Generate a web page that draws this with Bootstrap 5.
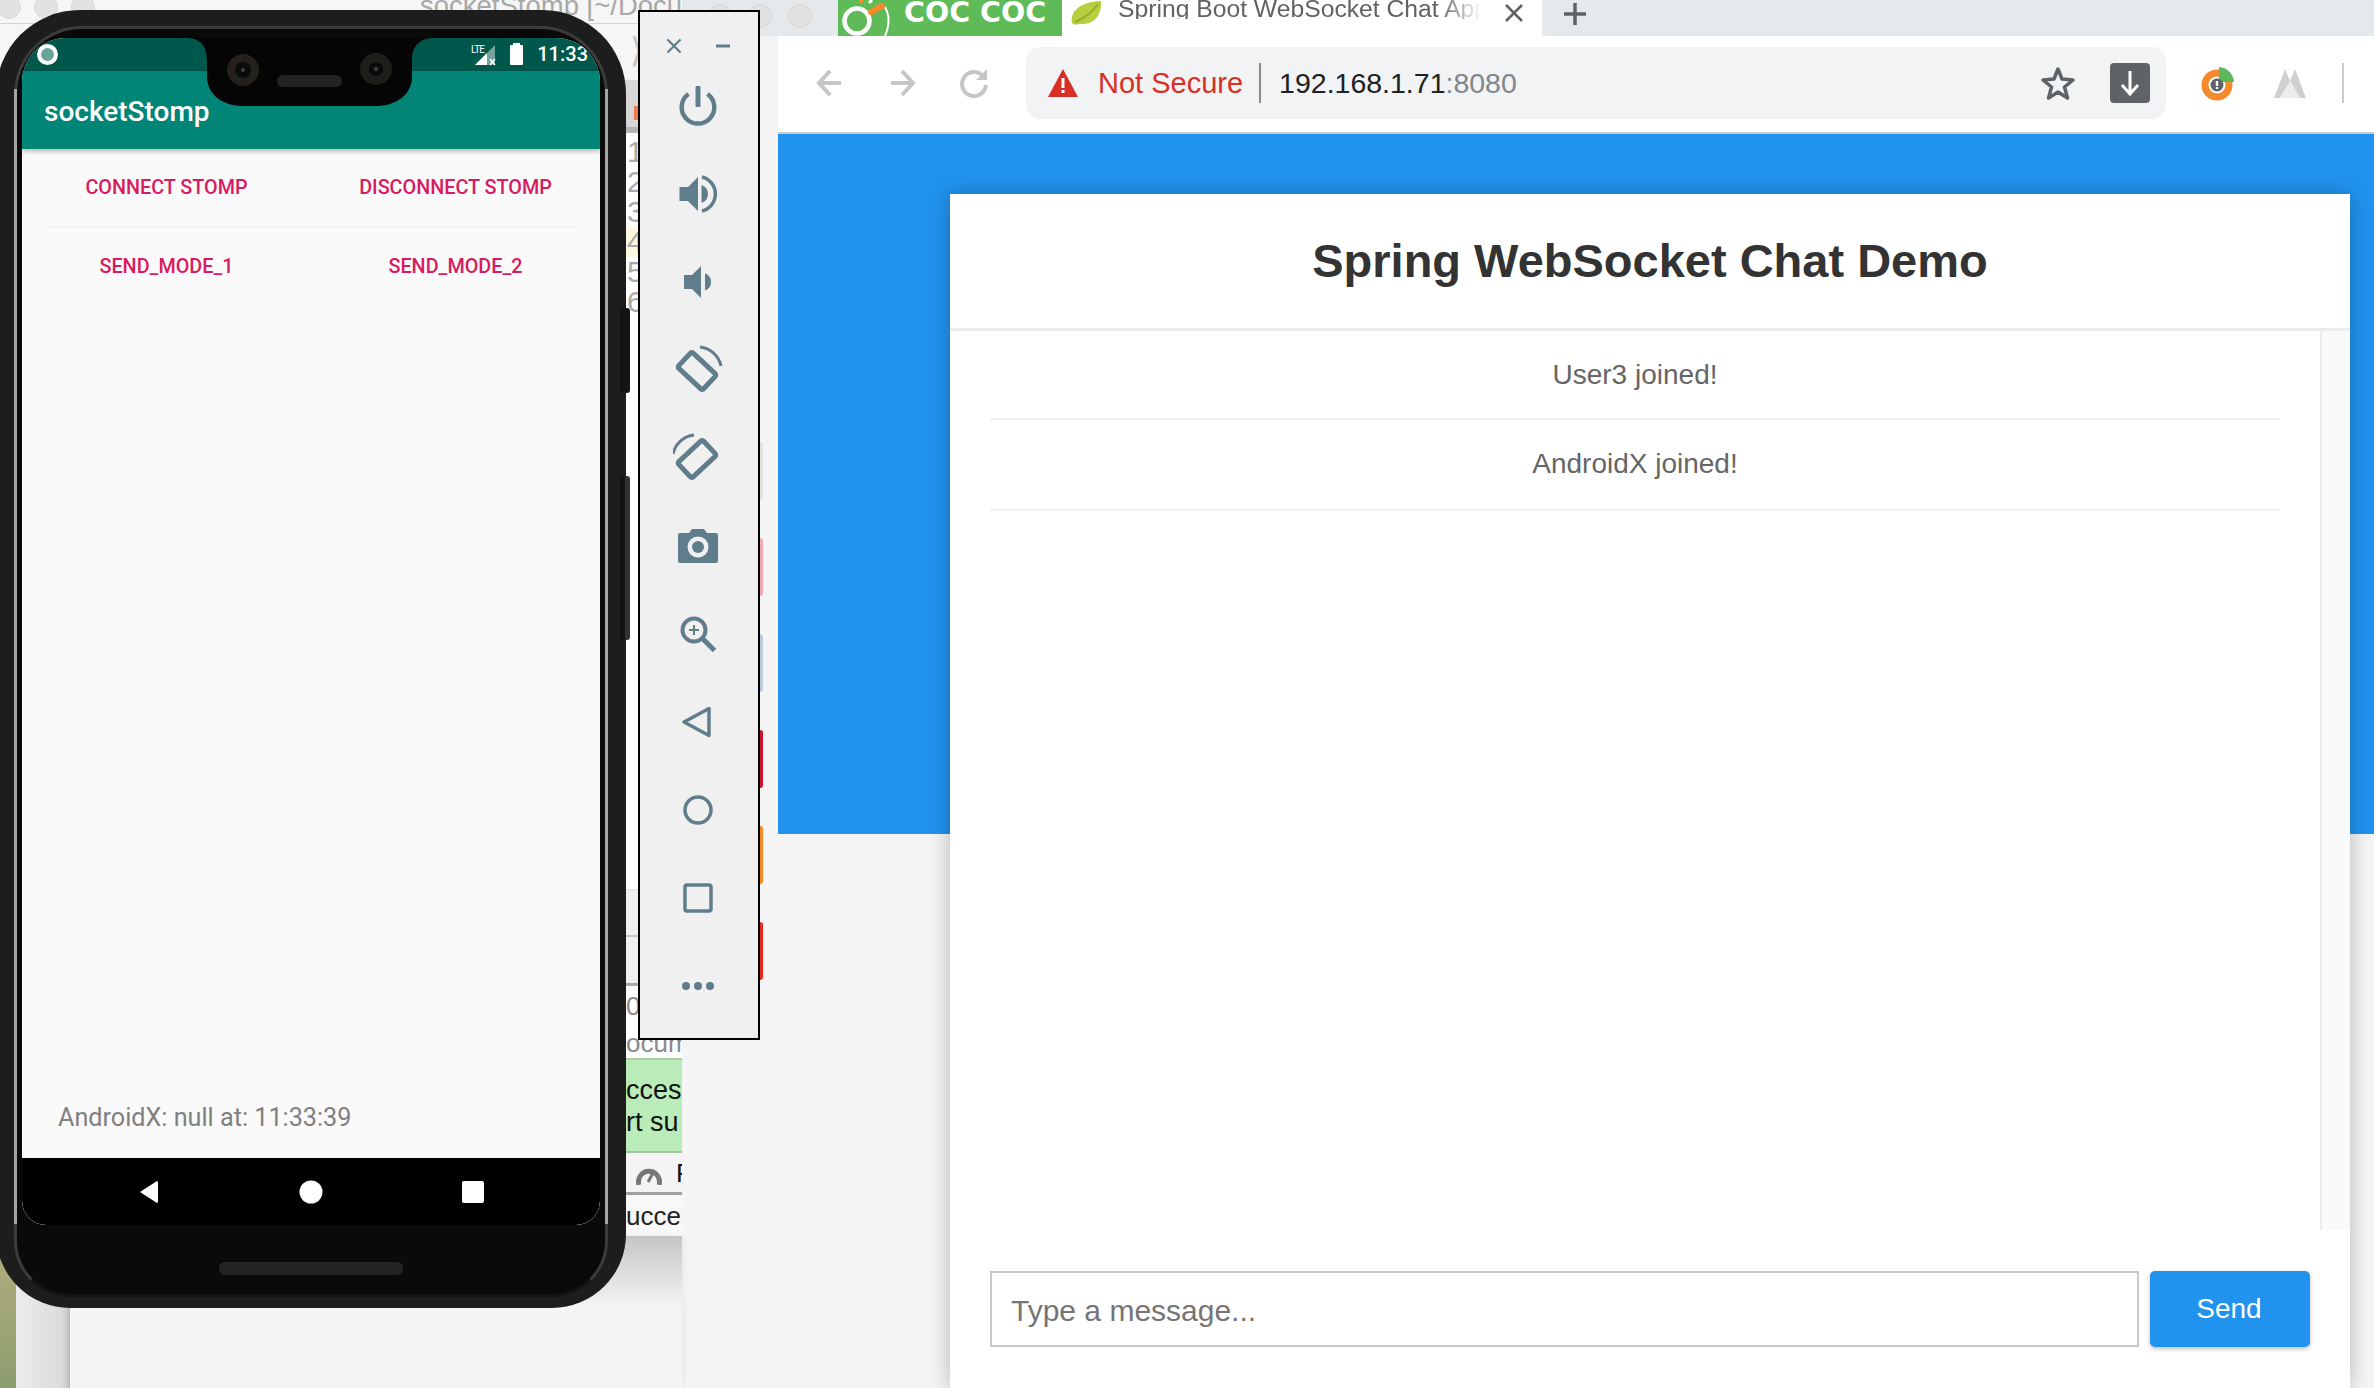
<!DOCTYPE html>
<html lang="en">
<head>
<meta charset="UTF-8">
<title>socketStomp and Spring WebSocket Chat</title>
<link href="https://cdn.jsdelivr.net/npm/bootstrap@5.3.0/dist/css/bootstrap.min.css" rel="stylesheet">
<style>
    html, body { margin: 0; height: 100%; }
    body { width: 2374px; height: 1388px; overflow: hidden; position: relative; background: #f5f5f5; font-family: "Liberation Sans", Arial, sans-serif; }

    /* IDE window behind everything */
    .ide { position: absolute; left: 0; top: 0; width: 682px; height: 1237px; overflow: hidden; background: #fff; }
    .ide-title { height: 24px; background: #f6f6f6; border-bottom: 1px solid #d4d4d4; overflow: hidden; }
    .light-dot { width: 24px; height: 24px; border-radius: 50%; background: #e2e2e2; border: 1px solid #d8d8d8; flex: none; margin-top: -5px; }
    .ide-title .light-dot { margin-right: 16px; margin-left: -3px; }
    .ide-name { position: absolute; left: 420px; top: -12px; font-size: 27.5px; line-height: 36px; color: #a8a8a8; white-space: nowrap; }
    .ide-tools { height: 56px; background: #f6f6f6; padding-left: 630px; color: #c4c4c4; font-size: 34px; line-height: 52px; }
    .ide-tabs { height: 53px; background: #d6d6d6; border-bottom: 6px solid #b4b4b4; padding: 26px 0 0 634px; }
    .ide-tab-mark { width: 6px; height: 14px; background: #ef7d4c; }
    .ide-edit { height: 756px; background: #fff; padding: 4px 0 0 627px; color: #aaa; font-size: 30px; line-height: 30px; }
    .ide-edit div { height: 30px; }
    .ide-edit .cur-line { background: #fdf8e0; margin-left: -1px; padding-left: 1px; }
    .ide-rule-a { height: 46px; background: #f0f0f0; border-top: 2px solid #e6e6e6; }
    .ide-rule-b { height: 48px; background: #f0f0f0; border-top: 2px solid #c8c8c8; }
    .ide-run { height: 75px; background: #fff; border-top: 3px solid #a8a8a8; padding: 2px 0 0 626px; font-size: 26px; line-height: 37px; color: #8a8a8a; white-space: nowrap; overflow: hidden; }
    .ide-ok { height: 95px; background: #b9ecb9; border-top: 2px solid #a6cfa6; border-bottom: 2px solid #a0c8a0; padding: 14px 0 0 626px; font-size: 27px; line-height: 32px; color: #111; white-space: nowrap; overflow: hidden; }
    .ide-perf { height: 42px; background: #f4f4f4; padding-left: 636px; color: #111; font-size: 26px; line-height: 40px; gap: 14px; overflow: hidden; border-bottom: 3px solid #a0a0a0; }
    .perf-gauge { margin-top: 12px; flex: none; }
    .ide-log { height: 42px; background: #f8f8f8; padding-left: 626px; color: #222; font-size: 26px; line-height: 42px; white-space: nowrap; overflow: hidden; border-bottom: 1px solid #c8c8c8; }
    .ide-below { position: absolute; left: 0; top: 1237px; width: 682px; height: 151px; }
    .wall { width: 16px; background: linear-gradient(#b4ae7e, #8c9e6e); }
    .pale-win { width: 54px; background: linear-gradient(90deg, #ececec, #dcdcdc 85%, #c4c4c4); border-right: 1px solid #b8b8b8; }
    .back-win { background: linear-gradient(#c6c6c6, #f4f4f4 70px); box-shadow: 2px 0 8px rgba(0,0,0,.06); }

    /* slivers of the dock */
    .dock { position: absolute; left: 760px; top: 442px; width: 3px; gap: 38px; }
    .dock-item { height: 58px; border-radius: 0 4px 4px 0; }
    .dock-a { background: #e2e2dc; }
    .dock-b { background: #f6a9ae; }
    .dock-c { background: #bccbe0; }
    .dock-d { background: #c8142c; }
    .dock-e { background: #f58a22; }
    .dock-f { background: #e8291f; }

    /* browser */
    .tabs-strip { position: absolute; left: 682px; top: 0; right: 0; height: 36px; background: #e6e9ec; overflow: hidden; }
    .tabs-lights { width: 156px; padding-left: 26px; gap: 16px; }
    .coc-tab { width: 224px; height: 36px; background: #5fbb57; overflow: hidden; color: #fff; font-family: "DejaVu Sans", sans-serif; font-weight: 700; font-size: 28.5px; line-height: 22px; white-space: nowrap; }
    .coc-tab svg { flex: none; margin-right: 14px; }
    .coc-tab span { margin-top: -10px; }
    .page-tab { width: 480px; height: 36px; background: #fff; padding-left: 8px; }
    .tab-label { width: 364px; margin-left: 16px; height: 20px; margin-bottom: 18px; line-height: 20px; font-size: 24.7px; color: #5f6368; white-space: nowrap; overflow: hidden; -webkit-mask-image: linear-gradient(90deg, #000 88%, transparent); mask-image: linear-gradient(90deg, #000 88%, transparent); }
    .tab-x { margin-left: 22px; margin-bottom: 10px; }
    .tab-add { margin-left: 20px; margin-bottom: 8px; }

    .browser { position: absolute; left: 778px; top: 36px; right: 0; bottom: 0; background: #f4f4f4; overflow: hidden; }
    .tool-row { height: 98px; background: #fff; border-bottom: 2px solid #c9cbcd; padding: 12px 0 14px 0; flex: none; }
    .nav-btn { width: 72px; }
    .nav-first { margin-left: 16px; }
    .omni { width: 1140px; height: 72px; margin-left: 16px; background: #f1f3f4; border-radius: 14px; padding: 0 16px 0 21px; }
    .not-secure { color: #d93025; font-size: 29px; margin-left: 19px; padding-right: 16px; border-right: 2px solid #8a8a8a; line-height: 40px; white-space: nowrap; }
    .omni-url { margin-left: 18px; font-size: 28.5px; color: #202124; white-space: nowrap; }
    .omni-url span { color: #80868b; }
    .dl-box { width: 40px; height: 40px; background: #5f6368; border-radius: 4px; margin-left: 35px; }
    .ext-a { margin-left: 35px; }
    .ext-b { margin-left: 38px; }
    .tool-sep { width: 2px; height: 40px; background: #ccc; margin-left: 35px; }

    .hero { position: absolute; left: 0; right: 0; top: 98px; height: 700px; background: #2192ee; }
    .chat-card { position: absolute; left: 172px; top: 158px; width: 1400px; height: 1194px; background: #fff; box-shadow: 0 1px 20px rgba(0,0,0,.25); }
    .chat-head { height: 137px; border-bottom: 3px solid #ececec; flex: none; }
    .chat-head h2 { font-size: 47px; font-weight: 700; color: #333; margin: 0; line-height: 1.2; }
    .chat-body { height: 899px; flex: none; }
    .chat-list { width: 1370px; padding: 0 40px; list-style: none; margin: 0; }
    .chat-list li { height: 91px; line-height: 60px; padding-top: 14px; text-align: center; font-size: 28px; color: #666; border-bottom: 2px solid #f2f2f2; }
    .chat-list li:first-child { height: 89px; }
    .chat-track { width: 30px; background: #fafafa; border-left: 2px solid #ececec; }
    .chat-form { padding: 41px 40px 0; gap: 11px; }
    .chat-form .form-control { height: 76px; border: 2px solid #c8c8c8; border-radius: 0; font-size: 30px; padding: 4px 19px 0; color: #333; font-family: inherit; box-shadow: none; }
    .chat-form .form-control::placeholder { color: #757575; opacity: 1; }
    .send-btn { width: 160px; height: 76px; background: #2192ee; border: 0; border-radius: 5px; color: #fff; font-size: 28px; box-shadow: 0 2px 4px rgba(0,0,0,.25); flex: none; padding-right: 14px; }

    /* emulator side panel */
    .emu-panel { position: absolute; left: 638px; top: 10px; width: 122px; height: 1030px; background: #f0f0f0; border: 2px solid #000; padding-top: 18px; }
    .emu-head { height: 32px; padding: 0 28px 0 26px; }
    .emu-btn { height: 88px; padding-right: 2px; }

    /* phone */
    .phone { position: absolute; left: -4px; top: 10px; width: 630px; height: 1298px; background: #1d1d1d; border-radius: 84px 84px 74px 74px; padding: 16px 18px 11px 18px; }
    .phone::before, .phone::after { content: ""; position: absolute; left: 624px; width: 10px; background: #141414; border-radius: 0 3px 3px 0; }
    .phone::before { top: 298px; height: 85px; }
    .phone::after { top: 466px; height: 164px; border-right: 5px solid #333; }
    .phone-rim { height: 100%; background: #0a0a0a; border: 3px solid #3c3c3c; border-bottom-color: #141414; border-radius: 68px 68px 56px 56px; padding: 9px 5px 0; position: relative; }
    .phone-rim::before, .phone-rim::after { content: ""; position: absolute; top: 60px; bottom: 70px; width: 3px; background: #a4a4a4; }
    .phone-rim::before { left: -3px; }
    .phone-rim::after { right: -3px; }
    .phone-screen { height: 1187px; border-radius: 44px 44px 24px 24px; overflow: hidden; background: #fafafa; }
    .status-row { height: 33px; background: #00574b; padding: 0 12px 0 15px; color: #fff; flex: none; }
    .status-dot { width: 21px; height: 21px; border-radius: 50%; background: #68a49b; border: 4px solid #fff; }
    .status-time { font-family: Roboto, sans-serif; font-weight: 500; font-size: 20px; margin-left: 14px; line-height: 33px; }
    .battery { width: 13px; height: 20px; background: #fff; border-radius: 1px; position: relative; margin-left: 13px; }
    .battery::before { content: ""; position: absolute; left: 3px; top: -2px; width: 7px; height: 2px; background: #fff; }
    .app-bar { height: 78px; background: #008577; box-shadow: 0 2px 5px rgba(0,0,0,.3); padding-left: 22px; padding-top: 22px; flex: none; position: relative; }
    .app-bar span { color: #fff; font-family: Roboto, sans-serif; font-weight: 500; font-size: 28px; line-height: 38px; }
    .app-content { flex: 1 1 auto; }
    .app-btn { height: 77px; line-height: 77px; text-align: center; color: #d81b60; font-family: Roboto, sans-serif; font-weight: 500; font-size: 19.8px; }
    .app-line { height: 2px; background: #f2f2f2; margin: 0 22px; }
    .app-log { margin-top: auto; padding: 0 0 21px 36px; font-family: Roboto, sans-serif; font-size: 25.2px; line-height: 38px; color: #808080; }
    .soft-nav { height: 67px; background: #000; border-radius: 0 0 24px 24px; flex: none; }
    .soft-key { width: 162px; }
    .notch { position: absolute; left: 168px; top: 9px; }
    .chin-slot { width: 184px; height: 13px; margin: 37px auto 0; background: #242424; border-radius: 6px; }
</style>
</head>
<body>

<!-- IDE window, mostly covered by the phone -->
<div class="ide d-flex flex-column">
    <div class="ide-title d-flex">
        <span class="light-dot"></span><span class="light-dot"></span><span class="light-dot"></span>
        <span class="ide-name">socketStomp [~/Docu</span>
    </div>
    <div class="ide-tools">&#x27E9;</div>
    <div class="ide-tabs"><div class="ide-tab-mark"></div></div>
    <div class="ide-edit">
        <div>1</div><div>2</div><div>3</div><div class="cur-line">4</div><div>5</div><div>6</div>
    </div>
    <div class="ide-rule-a"></div>
    <div class="ide-rule-b"></div>
    <div class="ide-run">0-<br>ocum</div>
    <div class="ide-ok">ccess<br>rt su</div>
    <div class="ide-perf d-flex">
        <svg class="perf-gauge" width="26" height="20" viewBox="0 0 26 20"><path d="M3 20 A10.500 10.500 0 1 1 23 20" fill="none" stroke="#777" stroke-width="5"/><path d="M12 17 L17 8" stroke="#777" stroke-width="3"/></svg>
        <span>P</span>
    </div>
    <div class="ide-log">ucces</div>
</div>
<div class="ide-below d-flex">
    <div class="wall"></div>
    <div class="pale-win"></div>
    <div class="back-win flex-grow-1"></div>
</div>

<div class="dock d-flex flex-column">
    <div class="dock-item dock-a"></div>
    <div class="dock-item dock-b"></div>
    <div class="dock-item dock-c"></div>
    <div class="dock-item dock-d"></div>
    <div class="dock-item dock-e"></div>
    <div class="dock-item dock-f"></div>
</div>

<!-- Browser tabs -->
<div class="tabs-strip d-flex align-items-center">
    <div class="tabs-lights d-flex">
        <span class="light-dot"></span><span class="light-dot"></span><span class="light-dot"></span>
    </div>
    <div class="coc-tab d-flex align-items-center">
        <svg width="52" height="36" viewBox="0 0 52 36">
            <circle cx="19" cy="21" r="12.500" fill="none" stroke="#fff" stroke-width="4.500"/>
            <path d="M47 7 Q54 20 47 36" fill="none" stroke="#fff" stroke-width="2"/>
            <path d="M33 12 L44 6" stroke="#f58a2c" stroke-width="6" stroke-linecap="round"/>
            <path d="M22 3 L24 -1" stroke="#f58a2c" stroke-width="4"/>
            <path d="M31 3 L34 0" stroke="#fff" stroke-width="3"/>
        </svg>
        <span>COC COC</span>
    </div>
    <div class="page-tab d-flex align-items-center">
        <svg width="32" height="26" viewBox="0 0 32 26" class="mb-2"><path d="M2 22 C0 10 10 1 31 0 C32 12 26 24 10 23 C7 23 4 25 2 22Z" fill="#b7cf3e"/><path d="M5 21 C12 18 22 12 28 3" fill="none" stroke="#8fa82c" stroke-width="1.500"/></svg>
        <span class="tab-label">Spring Boot WebSocket Chat App</span>
        <svg class="tab-x" width="20" height="20" viewBox="0 0 20 20"><path d="M2 2 L18 18 M18 2 L2 18" stroke="#5f6368" stroke-width="2.500"/></svg>
    </div>
    <svg class="tab-add" width="26" height="26" viewBox="0 0 26 26"><path d="M13 2 V24 M2 13 H24" stroke="#5f6368" stroke-width="3.500"/></svg>
</div>

<!-- Browser window -->
<div class="browser">
    <div class="tool-row d-flex align-items-center">
        <div class="nav-btn nav-first d-flex justify-content-center">
            <svg width="28" height="30" viewBox="0 0 28 30"><path d="M25 15 H4 M14 3 L3 15 L14 27" fill="none" stroke="#c4c6c8" stroke-width="4"/></svg>
        </div>
        <div class="nav-btn d-flex justify-content-center">
            <svg width="28" height="30" viewBox="0 0 28 30"><path d="M3 15 H24 M14 3 L25 15 L14 27" fill="none" stroke="#c4c6c8" stroke-width="4"/></svg>
        </div>
        <div class="nav-btn d-flex justify-content-center">
            <svg width="30" height="30" viewBox="0 0 30 30"><path d="M24 8 A12 12 0 1 0 27 17" fill="none" stroke="#c4c6c8" stroke-width="4"/><path d="M17 12 H28 V1Z" fill="#c4c6c8"/></svg>
        </div>
        <div class="omni d-flex align-items-center">
            <svg width="32" height="30" viewBox="0 0 32 30"><path d="M16 1 L31 29 H1Z" fill="#d93025"/><rect x="14.500" y="10" width="3" height="10" fill="#fff"/><rect x="14.500" y="22" width="3" height="3" fill="#fff"/></svg>
            <span class="not-secure">Not Secure</span>
            <span class="omni-url">192.168.1.71<span>:8080</span></span>
            <svg class="ms-auto" width="34" height="34" viewBox="0 0 34 34"><path d="M17 3 L21 13 L32 14 L23.500 21 L26.500 32 L17 26 L7.500 32 L10.500 21 L2 14 L13 13Z" fill="none" stroke="#5f6368" stroke-width="3.500" stroke-linejoin="round"/></svg>
            <div class="dl-box d-flex align-items-center justify-content-center">
                <svg width="22" height="28" viewBox="0 0 22 28"><path d="M11 2 V25 M3 16 L11 25 L19 16" fill="none" stroke="#fff" stroke-width="3"/></svg>
            </div>
        </div>
        <svg class="ext-a" width="34" height="36" viewBox="0 0 34 36">
            <circle cx="16" cy="20" r="12" fill="none" stroke="#f58a2c" stroke-width="7"/>
            <path d="M18 2 A16 16 0 0 1 33 17 H18Z" fill="#5cb85c"/>
            <circle cx="16" cy="20" r="6.500" fill="#5f6368"/>
            <rect x="14.800" y="16" width="2.400" height="5" fill="#fff"/><rect x="14.800" y="22" width="2.400" height="2" fill="#fff"/>
        </svg>
        <svg class="ext-b" width="34" height="32" viewBox="0 0 34 32"><path d="M1 31 L12 2 L17 14 L22 2 L33 31 H27 L17 14 L7 31Z" fill="#cfcfcf"/><path d="M7 31 L17 14 L27 31Z" fill="#ececec"/></svg>
        <div class="tool-sep"></div>
    </div>
    <div class="hero"></div>
    <div class="chat-card d-flex flex-column">
        <div class="chat-head d-flex align-items-center justify-content-center">
            <h2>Spring WebSocket Chat Demo</h2>
        </div>
        <div class="chat-body d-flex">
            <ul class="chat-list">
                <li>User3 joined!</li>
                <li>AndroidX joined!</li>
            </ul>
            <div class="chat-track flex-grow-1"></div>
        </div>
        <form class="chat-form d-flex">
            <input type="text" class="form-control" placeholder="Type a message...">
            <button type="button" class="btn send-btn">Send</button>
        </form>
    </div>
</div>

<!-- Emulator side panel -->
<div class="emu-panel d-flex flex-column">
    <div class="emu-head d-flex align-items-center justify-content-between">
        <svg width="16" height="16" viewBox="0 0 16 16"><path d="M1.500 1.500 L14.500 14.500 M14.500 1.500 L1.500 14.500" stroke="#607d8b" stroke-width="2.200"/></svg>
        <svg width="14" height="4" viewBox="0 0 14 4"><rect width="14" height="3" y="0.500" fill="#607d8b"/></svg>
    </div>
    <div class="emu-btn d-flex align-items-center justify-content-center">
        <svg width="44" height="44" viewBox="0 0 44 44"><path d="M12.500 10 A16.300 16.300 0 1 0 31.500 10" fill="none" stroke="#607d8b" stroke-width="4.500"/><rect x="19.500" y="2" width="5" height="21" rx="1" fill="#607d8b"/></svg>
    </div>
    <div class="emu-btn d-flex align-items-center justify-content-center">
        <svg width="44" height="44" viewBox="0 0 44 44"><path d="M3.500 15 H12 L22 5 V39 L12 29 H3.500Z" fill="#607d8b"/><path d="M25.500 13 A9.500 9.500 0 0 1 25.500 31Z" fill="#607d8b"/><path d="M26 5 A17.500 17.500 0 0 1 26 39" fill="none" stroke="#607d8b" stroke-width="3.500"/></svg>
    </div>
    <div class="emu-btn d-flex align-items-center justify-content-center">
        <svg width="44" height="44" viewBox="0 0 44 44"><path d="M8 15 H16 L25 6 V38 L16 29 H8Z" fill="#607d8b"/><path d="M29 13.500 A9 9 0 0 1 29 30.500Z" fill="#607d8b"/></svg>
    </div>
    <div class="emu-btn d-flex align-items-center justify-content-center">
        <svg width="50" height="50" viewBox="0 0 50 50"><rect x="7" y="15.500" width="34" height="21" rx="2" transform="rotate(43 24 26)" fill="none" stroke="#607d8b" stroke-width="5"/><path d="M27 2 A24 24 0 0 1 48 21" fill="none" stroke="#607d8b" stroke-width="3"/></svg>
    </div>
    <div class="emu-btn d-flex align-items-center justify-content-center">
        <svg width="50" height="50" viewBox="0 0 50 50"><g transform="matrix(-1 0 0 1 48 0)"><rect x="7" y="15.500" width="34" height="21" rx="2" transform="rotate(43 24 26)" fill="none" stroke="#607d8b" stroke-width="5"/><path d="M27 2 A24 24 0 0 1 48 21" fill="none" stroke="#607d8b" stroke-width="3"/></g></svg>
    </div>
    <div class="emu-btn d-flex align-items-center justify-content-center">
        <svg width="44" height="44" viewBox="0 0 44 44"><path d="M4 9 H13 L16 5 H28 L31 9 H40 A2 2 0 0 1 42 11 V37 A2 2 0 0 1 40 39 H4 A2 2 0 0 1 2 37 V11 A2 2 0 0 1 4 9Z" fill="#607d8b"/><circle cx="22" cy="23" r="10.500" fill="#f0f0f0"/><circle cx="22" cy="23" r="6" fill="#607d8b"/></svg>
    </div>
    <div class="emu-btn d-flex align-items-center justify-content-center">
        <svg width="44" height="44" viewBox="0 0 44 44"><circle cx="18" cy="18" r="11.500" fill="none" stroke="#607d8b" stroke-width="4"/><path d="M13 18 H23 M18 13 V23" stroke="#607d8b" stroke-width="2"/><path d="M26.500 26.500 L38.500 38.500" stroke="#607d8b" stroke-width="5"/></svg>
    </div>
    <div class="emu-btn d-flex align-items-center justify-content-center">
        <svg width="44" height="44" viewBox="0 0 44 44"><path d="M8 22 L33 8.500 V35.500Z" fill="none" stroke="#607d8b" stroke-width="3.500" stroke-linejoin="round"/></svg>
    </div>
    <div class="emu-btn d-flex align-items-center justify-content-center">
        <svg width="44" height="44" viewBox="0 0 44 44"><circle cx="22" cy="22" r="13" fill="none" stroke="#607d8b" stroke-width="3.500"/></svg>
    </div>
    <div class="emu-btn d-flex align-items-center justify-content-center">
        <svg width="44" height="44" viewBox="0 0 44 44"><rect x="9" y="9" width="26" height="26" rx="2" fill="none" stroke="#607d8b" stroke-width="3.500"/></svg>
    </div>
    <div class="emu-btn d-flex align-items-center justify-content-center">
        <svg width="44" height="44" viewBox="0 0 44 44"><circle cx="10" cy="22" r="4" fill="#607d8b"/><circle cx="22" cy="22" r="4" fill="#607d8b"/><circle cx="34" cy="22" r="4" fill="#607d8b"/></svg>
    </div>
</div>

<!-- Pixel phone emulator -->
<div class="phone">
    <div class="phone-rim">
        <div class="phone-screen d-flex flex-column">
            <div class="status-row d-flex align-items-center">
                <span class="status-dot"></span>
                <svg class="ms-auto" width="26" height="24" viewBox="0 0 26 24">
                    <polygon points="4,22 24,2 24,22" fill="#fff" fill-opacity=".45"/>
                    <polygon points="4,22 16,10 16,22" fill="#fff"/>
                    <text x="0" y="10" font-family="Roboto, sans-serif" font-size="10" fill="#fff" textLength="14">LTE</text>
                    <path d="M19 16 L24 22 M24 16 L19 22" stroke="#fff" stroke-width="1.500"/>
                </svg>
                <span class="battery"></span>
                <span class="status-time">11:33</span>
            </div>
            <div class="app-bar"><span>socketStomp</span></div>
            <div class="app-content d-flex flex-column">
                <div class="row g-0">
                    <div class="col-6 app-btn">CONNECT STOMP</div>
                    <div class="col-6 app-btn">DISCONNECT STOMP</div>
                </div>
                <div class="app-line"></div>
                <div class="row g-0">
                    <div class="col-6 app-btn">SEND_MODE_1</div>
                    <div class="col-6 app-btn">SEND_MODE_2</div>
                </div>
                <div class="app-log">AndroidX: null at: 11:33:39</div>
            </div>
            <div class="soft-nav d-flex align-items-center justify-content-center">
                <div class="soft-key d-flex justify-content-center"><svg width="22" height="24" viewBox="0 0 22 24"><path d="M2 12 L19 1 Q20 1 20 3 V21 Q20 23 19 23Z" fill="#fff"/></svg></div>
                <div class="soft-key d-flex justify-content-center"><svg width="24" height="24" viewBox="0 0 24 24"><circle cx="12" cy="12" r="11.500" fill="#fff"/></svg></div>
                <div class="soft-key d-flex justify-content-center"><svg width="22" height="24" viewBox="0 0 22 24"><rect y="1" width="22" height="22" rx="2" fill="#fff"/></svg></div>
            </div>
        </div>
        <div class="chin-slot"></div>
        <svg class="notch" width="250" height="69" viewBox="0 0 250 69">
            <path d="M0 0 H250 C235 0 227 7 227 23 V38 C227 58 210 68 190 68 H59 C39 68 22 58 22 38 V23 C22 7 15 0 0 0Z" fill="#050505"/>
            <circle cx="58" cy="32" r="16" fill="#24211c"/><circle cx="58" cy="32" r="8" fill="#0b0b0b"/><circle cx="58" cy="32" r="2" fill="#4a4036"/>
            <circle cx="191" cy="31" r="16" fill="#1f1d19"/><circle cx="191" cy="31" r="7" fill="#0b0b0b"/><circle cx="191" cy="31" r="2" fill="#4a4036"/>
            <rect x="92" y="37" width="65" height="12" rx="6" fill="#222"/>
        </svg>
    </div>
</div>

<script src="https://cdn.jsdelivr.net/npm/bootstrap@5.3.0/dist/js/bootstrap.bundle.min.js"></script>
</body>
</html>
